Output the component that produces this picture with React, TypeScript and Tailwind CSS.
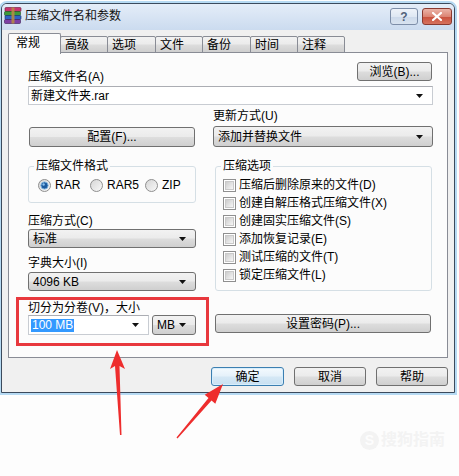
import clsx from "clsx";
import type { ReactNode } from "react";

const BTN_BG =
  "bg-[linear-gradient(to_bottom,#f2f2f2_0%,#ebebeb_48%,#dddddd_52%,#cfcfcf_100%)]";

const TABS = [
  { label: "高级", w: "w-[48px]" },
  { label: "选项", w: "w-[49px]" },
  { label: "文件", w: "w-[48px]" },
  { label: "备份", w: "w-[49px]" },
  { label: "时间", w: "w-[48px]" },
  { label: "注释", w: "w-[48px]" },
];

const OPTIONS = [
  "压缩后删除原来的文件(D)",
  "创建自解压格式压缩文件(X)",
  "创建固实压缩文件(S)",
  "添加恢复记录(E)",
  "测试压缩的文件(T)",
  "锁定压缩文件(L)",
];

function DropArrow() {
  return (
    <svg width="7" height="4" viewBox="0 0 7 4" className="shrink-0">
      <path d="M0 0H7L3.5 4Z" fill="#111" />
    </svg>
  );
}

function Button({
  label,
  className,
  primary = false,
}: {
  label: string;
  className?: string;
  primary?: boolean;
}) {
  return (
    <div
      className={clsx(
        "flex items-center justify-center rounded-[3px] border leading-[12px]",
        primary
          ? "border-[#3c7fb1] bg-[linear-gradient(to_bottom,#f4fafe_0%,#e5f1fa_48%,#d5e8f5_52%,#c9e0f1_100%)] shadow-[inset_0_0_0_1px_#d8eefc]"
          : clsx("border-[#707070]", BTN_BG),
        className,
      )}
    >
      {label}
    </div>
  );
}

// drop-down list (not editable)
function Select({ value, className }: { value: string; className?: string }) {
  return (
    <div
      className={clsx(
        "flex items-center justify-between rounded-[3px] border border-[#707070] pl-[4px] pr-[9px] leading-[12px]",
        BTN_BG,
        className,
      )}
    >
      <span>{value}</span>
      <DropArrow />
    </div>
  );
}

// editable combo box
function Edit({ children, className }: { children: ReactNode; className?: string }) {
  return (
    <div
      className={clsx(
        "flex items-center justify-between border border-[#c8ccd2] border-t-[#abadb3] bg-white pl-[2px] pr-[9px] leading-[12px]",
        className,
      )}
    >
      {children}
      <DropArrow />
    </div>
  );
}

function Radio({ checked = false }: { checked?: boolean }) {
  return (
    <svg width="13" height="13" viewBox="0 0 13 13" className="shrink-0">
      <defs>
        <linearGradient id={checked ? "rgOn" : "rgOff"} x1="0" y1="0" x2="1" y2="1">
          <stop offset="0" stopColor="#d4d4d4" />
          <stop offset="1" stopColor="#fafafa" />
        </linearGradient>
      </defs>
      <circle cx="6.5" cy="6.5" r="6" fill={`url(#${checked ? "rgOn" : "rgOff"})`} stroke="#8f8f8f" />
      {checked && (
        <>
          <circle cx="6.5" cy="6.5" r="3.6" fill="#1c5a9e" stroke="#7bb0dc" strokeWidth="1" />
          <circle cx="5.6" cy="5.5" r="1.2" fill="#8cc4f0" />
        </>
      )}
    </svg>
  );
}

function Checkbox() {
  return (
    <div className="h-[13px] w-[13px] shrink-0 border border-[#8f8f8f] bg-white p-[1px]">
      <div className="h-full w-full border border-[#c9c9c9] bg-[linear-gradient(135deg,#cdcdcd,#f6f6f6)]" />
    </div>
  );
}

function GroupBox({
  title,
  className,
  children,
}: {
  title: string;
  className?: string;
  children: ReactNode;
}) {
  return (
    <fieldset className={clsx("rounded-[3px] border border-[#d5dfe5] p-0", className)}>
      <legend className="ml-[5px] px-[2px] leading-[12px]">{title}</legend>
      {children}
    </fieldset>
  );
}

function RarIcon() {
  return (
    <svg width="18" height="17" viewBox="0 0 18 17" className="shrink-0">
      <rect x="1" y="0.5" width="16" height="4" rx="1" fill="#c8346f" stroke="#6b1838" strokeWidth="0.6" />
      <rect x="0.5" y="4.5" width="16" height="4" rx="1" fill="#3c9a3c" stroke="#1d4e1d" strokeWidth="0.6" />
      <rect x="1" y="8.5" width="16" height="4" rx="1" fill="#2e62c4" stroke="#142f66" strokeWidth="0.6" />
      <rect x="0.5" y="12.5" width="16" height="4" rx="1" fill="#7d3fa3" stroke="#3b1a50" strokeWidth="0.6" />
      <rect x="7.5" y="0.5" width="3" height="16" fill="#b58a45" opacity="0.9" />
    </svg>
  );
}

export default function App() {
  return (
    <div className="relative h-[476px] w-[459px] overflow-hidden bg-[#fdfdfd] pt-[3px] pl-[1px] font-['Liberation_Sans','Noto_Sans_CJK_SC',sans-serif] text-[12px] text-black">
      {/* dialog window */}
      <div className="h-[390px] w-[454px] overflow-hidden rounded-t-[6px] border border-[#3b4a5c] bg-[#f0f0f0] shadow-[0_0_0_2px_#b6daf3]">
        {/* title bar */}
        <div className="flex h-[26px] items-start justify-between bg-[linear-gradient(to_bottom,#e4edf8,#cbdbef)] pl-[2px] pr-[2px]">
          <div className="flex items-center gap-[3px] pt-[3px]">
            <RarIcon />
            <span className="leading-[16px] text-[#111]">压缩文件名和参数</span>
          </div>
          <div className="flex gap-[4px] pt-[4px]">
            <div className="flex h-[17px] w-[28px] items-center justify-center rounded-[3px] border border-[#7d8ea8] bg-[linear-gradient(to_bottom,#eef3f9_0%,#dfe8f3_50%,#ccd9ea_51%,#d8e3f0_100%)] text-[12px] font-bold leading-none text-[#52627a]">
              ?
            </div>
            <div className="flex h-[17px] w-[30px] items-center justify-center rounded-[3px] border border-[#8a3a30] bg-[linear-gradient(to_bottom,#ebb4a8_0%,#dc8574_50%,#c9503c_51%,#d6725e_100%)]">
              <svg width="10" height="9" viewBox="0 0 10 9">
                <path d="M1 1L9 8M9 1L1 8" stroke="#fff" strokeWidth="2.2" strokeLinecap="square" />
              </svg>
            </div>
          </div>
        </div>

        {/* body */}
        <div className="px-[6px] pt-[3px]">
          {/* tabs */}
          <div className="flex h-[20px] items-end">
            <div className="relative z-10 -mb-px h-[21px] w-[53px] rounded-t-[2px] border border-b-0 border-[#898c95] bg-[#fcfcfc] pl-[7px] pt-[3px] leading-[13px]">
              常规
            </div>
            {TABS.map((t) => (
              <div
                key={t.label}
                className={clsx(
                  "-ml-px h-[17px] rounded-t-[2px] border border-[#898c95] pl-[4px] pt-[2px] leading-[13px]",
                  BTN_BG,
                  t.w,
                )}
              >
                {t.label}
              </div>
            ))}
          </div>

          {/* tab page */}
          <div className="relative -mt-px h-[306px] border border-[#898c95] bg-[#fcfcfc] pl-[19px] pr-[14px] pt-[9px]">
            <div className="flex items-start justify-between">
              <span className="mt-[9px] leading-[12px]">压缩文件名(A)</span>
              <Button label="浏览(B)..." className="mr-px h-[19px] w-[75px]" />
            </div>
            <Edit className="mt-[3px] h-[19px]">
              <span>新建文件夹.rar</span>
            </Edit>

            <div className="mt-[5px] flex gap-[17px]">
              {/* left column */}
              <div className="flex w-[168px] flex-col">
                <Button label="配置(F)..." className="ml-px mt-[17px] h-[20px] w-[166px]" />
                <GroupBox title="压缩文件格式" className="mt-[13px] h-[43px]">
                  <div className="flex items-center pl-[9px] pt-[7px]">
                    <div className="flex w-[52px] items-center gap-[4px]">
                      <Radio checked />
                      <span className="leading-[13px]">RAR</span>
                    </div>
                    <div className="flex w-[55px] items-center gap-[4px]">
                      <Radio />
                      <span className="leading-[13px]">RAR5</span>
                    </div>
                    <div className="flex items-center gap-[4px]">
                      <Radio />
                      <span className="leading-[13px]">ZIP</span>
                    </div>
                  </div>
                </GroupBox>
                <span className="mt-[12px] leading-[12px]">压缩方式(C)</span>
                <Select value="标准" className="mt-[2px] h-[19px]" />
                <span className="mt-[9px] leading-[12px]">字典大小(I)</span>
                <Select value="4096 KB" className="mt-[3px] h-[19px]" />
                <span className="mt-[11px] leading-[12px]">切分为分卷(V)，大小</span>
                <div className="mt-px flex gap-[3px]">
                  <Edit className="h-[20px] w-[121px]">
                    <span className="bg-[#3399ff] px-px leading-[13px] text-white">100 MB</span>
                  </Edit>
                  <Select value="MB" className="h-[20px] w-[44px] pr-[7px]" />
                </div>
              </div>

              {/* right column */}
              <div className="flex w-[220px] flex-col">
                <span className="leading-[12px]">更新方式(U)</span>
                <Select value="添加并替换文件" className="mt-[4px] h-[21px]" />
                <GroupBox title="压缩选项" className="ml-[2px] mt-[13px] h-[131px] w-[217px]">
                  <div className="flex flex-col pl-[7px] pt-[4px]">
                    {OPTIONS.map((o) => (
                      <div key={o} className="flex h-[18px] items-center gap-[3px]">
                        <Checkbox />
                        <span className="leading-[13px]">{o}</span>
                      </div>
                    ))}
                  </div>
                </GroupBox>
                <Button label="设置密码(P)..." className="ml-[2px] mt-[23px] h-[19px] w-[216px]" />
              </div>
            </div>
          </div>

          {/* dialog buttons */}
          <div className="mt-[9px] flex justify-end gap-[10px]">
            <Button label="确定" primary className="h-[19px] w-[73px]" />
            <Button label="取消" className="h-[19px] w-[72px]" />
            <Button label="帮助" className="h-[19px] w-[72px]" />
          </div>
        </div>
      </div>

      {/* red annotation box */}
      <div className="pointer-events-none absolute left-[16px] top-[297px] h-[49px] w-[193px] border-[3px] border-[#e8383d]" />

      {/* red annotation arrows */}
      <svg
        className="pointer-events-none absolute left-0 top-0"
        width="459"
        height="476"
        viewBox="0 0 459 476"
      >
        <polygon
          points="117,350 125,369 119.5,366 121.5,435 120,435 115,366 110,369"
          fill="#ee2d2d"
        />
        <polygon
          points="223,384 215.3,403.7 211.5,400.5 177.5,438.5 176.5,437.5 208.5,397.9 204.7,394.7"
          fill="#ee2d2d"
        />
      </svg>

      {/* faint watermark */}
      <div className="pointer-events-none absolute left-[360px] top-[430px] flex items-center gap-[2px] whitespace-nowrap text-[16px] font-bold leading-[20px] text-[#f3f3f3]">
        <span className="flex h-[19px] w-[19px] items-center justify-center rounded-full bg-[#f3f3f3] text-[14px] text-[#fdfdfd]">
          S
        </span>
        <span>搜狗指南</span>
      </div>
    </div>
  );
}
